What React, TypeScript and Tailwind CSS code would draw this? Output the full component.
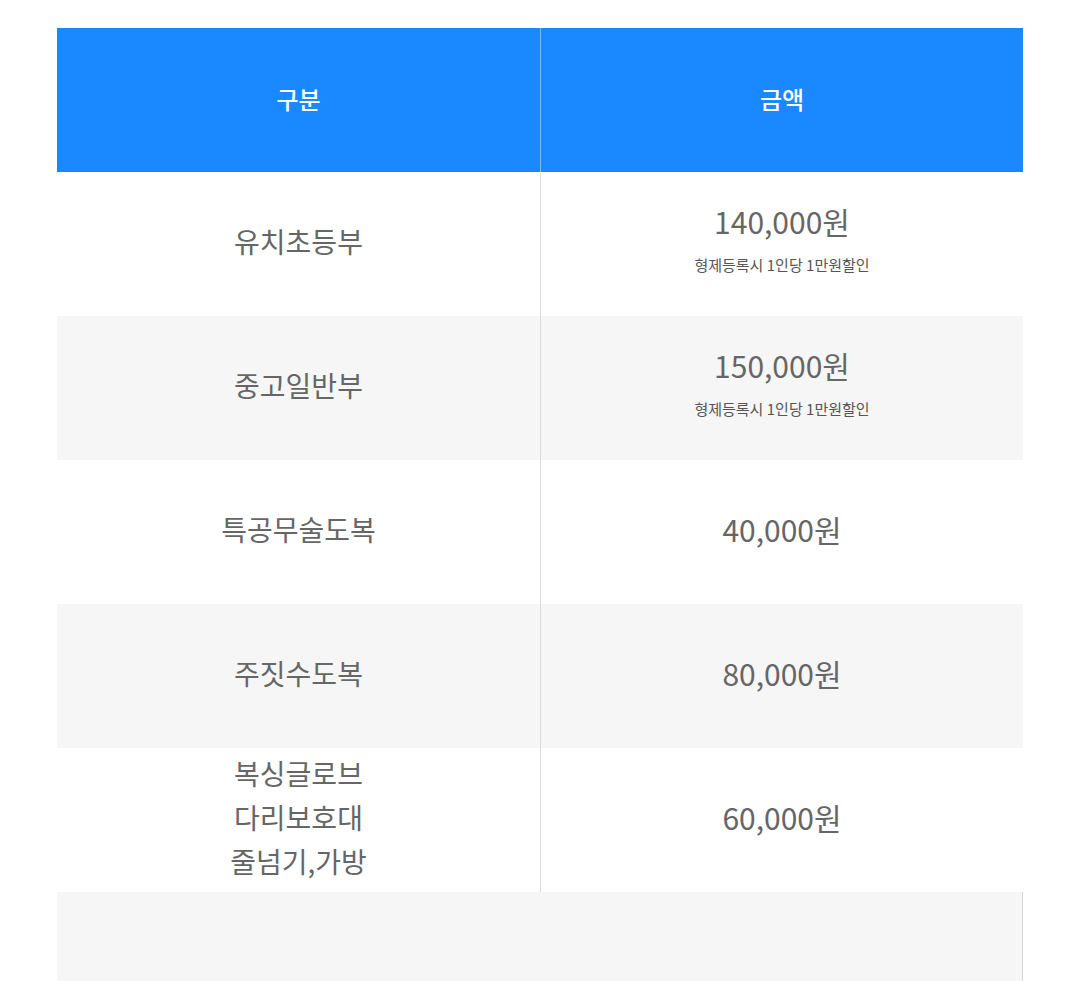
import React from "react";

const font = { fontFamily: '"Noto Sans CJK KR", "Noto Sans", sans-serif' };

type Row = { name: string[]; price: string; note?: string; bg: string };

const rows: Row[] = [
  { name: ["유치초등부"], price: "140,000원", note: "형제등록시 1인당 1만원할인", bg: "bg-white" },
  { name: ["중고일반부"], price: "150,000원", note: "형제등록시 1인당 1만원할인", bg: "bg-[#f6f6f6]" },
  { name: ["특공무술도복"], price: "40,000원", bg: "bg-white" },
  { name: ["주짓수도복"], price: "80,000원", bg: "bg-[#f6f6f6]" },
  { name: ["복싱글로브", "다리보호대", "줄넘기,가방"], price: "60,000원", bg: "bg-white" },
];

export default function App() {
  return (
    <div className="min-h-[981px] bg-white pt-[28px] pl-[57px]" style={font}>
      <div className="w-[966px]">
        <div className="grid h-[144px] grid-cols-[484px_1fr] bg-[#1a88fe] text-[24px] font-medium text-white">
          <div className="flex items-center justify-center border-r border-[#7fb9fb] pb-[2px]">구분</div>
          <div className="flex items-center justify-center pb-[2px]">금액</div>
        </div>
        {rows.map((r, i) => (
          <div key={i} className={`grid h-[144px] grid-cols-[484px_1fr] ${r.bg}`}>
            <div className="flex flex-col items-center justify-center border-r border-[#dcdcdc] pb-[7px] text-[28px] leading-[44px] text-[#666]">
              {r.name.map((n, j) => (
                <div key={j}>{n}</div>
              ))}
            </div>
            <div className={`flex flex-col items-center justify-center text-[#666] ${r.note ? "pb-[12px]" : "pb-[7px]"}`}>
              <div className="text-[30px] leading-[40px]">{r.price}</div>
              {r.note && <div className="mt-[14px] text-[15px] leading-[20px] text-[#555]">{r.note}</div>}
            </div>
          </div>
        ))}
        <div className="h-[144px] border-r border-[#d6d6d6] bg-[#f6f6f6]" />
      </div>
    </div>
  );
}
